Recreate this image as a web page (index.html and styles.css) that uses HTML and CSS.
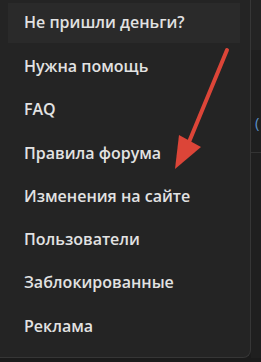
FILE: index.html
```html
<!DOCTYPE html>
<html lang="ru">
  <head>
    <meta charset="UTF-8" />
    <meta name="viewport" content="width=device-width, initial-scale=1.0" />
    <title>Меню</title>
    <link rel="stylesheet" href="styles.css">
  </head>
  <body>
    <div class="page">
      <nav class="menu">
        <a class="item active" href="#">Не пришли деньги?</a>
        <a class="item" href="#">Нужна помощь</a>
        <a class="item" href="#">FAQ</a>
        <a class="item" href="#">Правила форума</a>
        <a class="item" href="#">Изменения на сайте</a>
        <a class="item" href="#">Пользователи</a>
        <a class="item" href="#">Заблокированные</a>
        <a class="item" href="#">Реклама</a>
      </nav>
      <aside class="side">
        <div class="side-top"></div>
        <div class="side-text">(</div>
        <div class="side-row"></div>
      </aside>
    </div>

    <!-- стрелка поверх меню -->
    <svg class="arrow" width="261" height="362" viewBox="0 0 261 362">
      <line x1="227" y1="50" x2="189" y2="142" stroke="#dc4538" stroke-width="4" stroke-linecap="round" />
      <polygon points="175,169 179,135 201,147" fill="#dc4538" />
    </svg>
  </body>
</html>
```

FILE: styles.css
```css
* {
  box-sizing: border-box;
  margin: 0;
  padding: 0;
}
body {
  font-family: "Open Sans", "Noto Sans", sans-serif;
  background-color: #1b1b1b;
  width: 261px;
  height: 362px;
  overflow: hidden;
  position: relative;
}
.page {
  display: flex;
  height: 358px;
}
.menu {
  width: 251px;
  background-color: #242424;
  border-right: 1px solid #363636;
  border-bottom: 1px solid #363636;
  border-bottom-right-radius: 8px;
  padding: 3px 10px 0 8px;
  display: flex;
  flex-direction: column;
}
.item {
  display: block;
  height: 43.3px;
  line-height: 40px;
  padding-left: 16px;
  color: #e2e2e2;
  font-size: 16px;
  font-weight: 600;
  text-decoration: none;
}
.item.active {
  background-color: #2a2a2a;
  height: 40px;
  line-height: 39px;
  margin-bottom: 3px;
}
.side {
  flex: 1;
  background-color: #1f1f1f;
  display: flex;
  flex-direction: column;
}
.side-top {
  height: 50px;
  background-color: #232323;
}
.side-text {
  margin-top: 62px;
  padding-left: 4px;
  color: #5b8fc7;
  font-size: 15px;
  line-height: 20px;
}
.side-row {
  margin-top: 20px;
  height: 1px;
  background-color: #333;
}
.arrow {
  position: absolute;
  top: 0;
  left: 0;
}
```
